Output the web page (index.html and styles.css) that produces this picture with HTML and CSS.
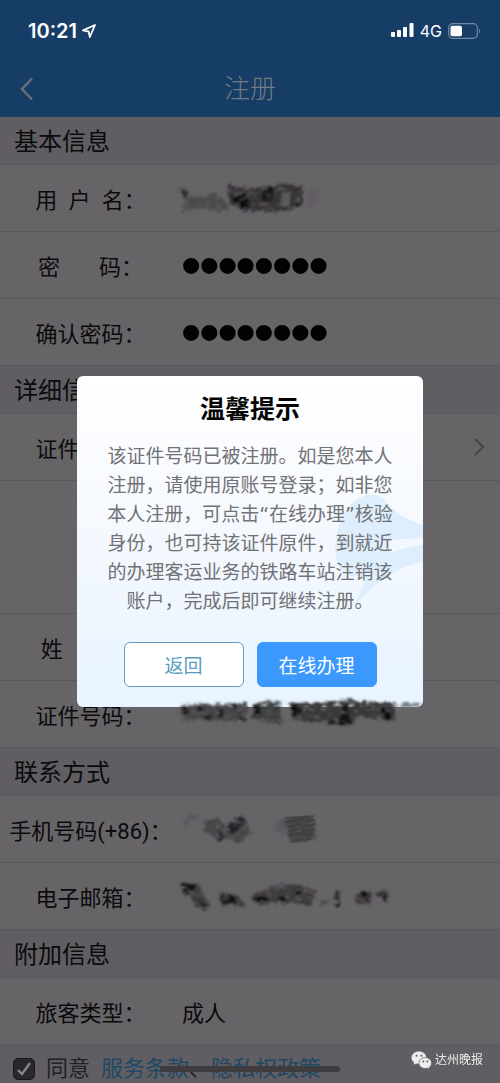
FILE: index.html
```html
<!DOCTYPE html>
<html lang="zh-CN">
<head>
  <meta charset="UTF-8" />
  <meta name="viewport" content="width=device-width, initial-scale=1.0"/>
  <title>注册</title>
  <link rel="stylesheet" href="styles.css">
</head>
<body>
  <header class="header">
    <div class="status-bar">
      <div class="status-left">
        <span>10:21</span>
        <svg width="14" height="14" viewBox="0 0 14 14"><path d="M1 6.4L13 1L7.8 13L6.7 7.5Z" fill="none" stroke="#fff" stroke-width="1.8" stroke-linejoin="round"/></svg>
      </div>
      <div class="status-right">
        <svg width="23" height="15" viewBox="0 0 23 15" fill="#fff">
          <rect x="0" y="9" width="4" height="5" rx="1"/>
          <rect x="6" y="7" width="4" height="7" rx="1"/>
          <rect x="12" y="4" width="4" height="10" rx="1"/>
          <rect x="18.500" y="0" width="4" height="14" rx="1"/>
        </svg>
        <span>4G</span>
        <svg width="33" height="16" viewBox="0 0 33 16">
          <rect x=".7" y=".7" width="28.600" height="14.600" rx="4" fill="none" stroke="#7189a5" stroke-width="1.2"/>
          <rect x="2.500" y="2.700" width="11.500" height="10.600" rx="2" fill="#fff"/>
          <path d="M31 5.500Q33 8 31 10.500Z" fill="#7189a5"/>
        </svg>
      </div>
    </div>
    <div class="nav">
      <button class="back" aria-label="返回上一页">
        <svg width="14" height="24" viewBox="0 0 14 24"><path d="M12 1.500L2 12L12 22.500" fill="none" stroke="#6b7178" stroke-width="2.4"/></svg>
      </button>
      <h1>注册</h1>
    </div>
  </header>

  <svg class="defs" width="0" height="0" aria-hidden="true">
    <filter id="smudge" x="-5%" y="-30%" width="110%" height="160%">
      <feTurbulence type="fractalNoise" baseFrequency=".16 .26" numOctaves="3" seed="7" result="n"/>
      <feDisplacementMap in="SourceGraphic" in2="n" scale="8" xChannelSelector="R" yChannelSelector="G" result="d"/>
      <feColorMatrix in="n" type="matrix" values="0 0 0 0 0  0 0 0 0 0  0 0 0 0 0  3 0 0 0 -.5" result="mask"/>
      <feComposite in="d" in2="mask" operator="in"/>
      <feGaussianBlur stdDeviation=".8"/>
    </filter>
  </svg>

  <form>
    <h2>基本信息</h2>
    <div class="row">
      <label for="user">用&ensp;户&ensp;名：</label>
      <div class="value" id="user">
        <svg class="scribble" width="150" height="36" viewBox="0 0 150 36">
          <g filter="url(#smudge)">
            <path d="M2 6L10 10L9 15L20 17L38 13L50 24L50 31L20 29L5 31L7 18Z" fill="#4b494c"/>
            <path d="M2 6L10 12L7 17L4 12Z" fill="#29282a"/>
            <path d="M49 4L70 8L94 6L102 3L125 6L125 25L112 31L70 31L52 24Z" fill="#343235"/>
            <path d="M52 17L67 14L74 24L67 31Z" fill="#0b0a0c"/>
            <path d="M85 9L96 6L95 20L84 23Z" fill="#161517"/>
            <path d="M104 13L113 12L112 24L103 27Z" fill="#58565a"/>
            <path d="M119 20L126 20L120 26Z" fill="#0b0a0c"/>
            <path d="M129 12L140 10L139 25L130 28Z" fill="#5f5c60"/>
          </g>
        </svg>
      </div>
    </div>
    <div class="row">
      <label for="pwd">密&emsp;&ensp;&nbsp;码：</label>
      <input class="value" type="password" id="pwd" value="12345678" />
    </div>
    <div class="row">
      <label for="pwd2">确认密码：</label>
      <input class="value" type="password" id="pwd2" value="12345678" />
    </div>

    <h2>详细信息</h2>
    <div class="row">
      <span class="label">证件类型：</span>
      <svg class="arrow" width="12" height="18" viewBox="0 0 12 18"><path d="M2 1L10 9L2 17" fill="none" stroke="#454347" stroke-width="2"/></svg>
    </div>
    <div class="row blank"></div>
    <div class="row">
      <span class="label">姓&emsp;&ensp;名：</span>
    </div>
    <div class="row">
      <span class="label">证件号码：</span>
      <div class="value over">
        <svg class="scribble" width="244" height="36" viewBox="0 0 244 36">
          <g filter="url(#smudge)">
            <path d="M3 8L70 7L68 25L5 24Z" fill="#464447"/>
            <path d="M5 8L12 15L7 20ZM20 9L27 12L20 18ZM27 18L36 21L29 26ZM38 14L46 13L45 22L39 21ZM54 8L60 11L56 16ZM62 18L69 23L58 25Z" fill="#141315"/>
            <path d="M75 7L102 4L104 28L74 24Z" fill="#3d4041"/>
            <path d="M76 9L82 9L83 18L76 18ZM95 10L102 10L97 15Z" fill="#0d0c0e"/>
            <path d="M111 7L145 6L173 3L181 6L218 6L216 25L180 20L174 29L145 27L116 23Z" fill="#373839"/>
            <path d="M112 8L123 10L124 20L116 22ZM164 14L170 8L174 28L150 26L163 21ZM201 12L208 11L217 24L209 23Z" fill="#0b0a0c"/>
            <path d="M215 8L243 6L239 10L219 13Z" fill="#777f82"/>
          </g>
        </svg>
      </div>
    </div>

    <h2>联系方式</h2>
    <div class="row">
      <span class="label">手机号码(+86)：</span>
      <div class="value">
        <svg class="scribble" width="150" height="40" viewBox="0 0 150 40">
          <g filter="url(#smudge)">
            <path d="M6 11L12 5L28 11L14 9L8 17ZM8 28L12 25L10 30Z" fill="#565458"/>
            <path d="M26 12L40 8L48 17L64 5L74 24L58 35L53 30L40 31L27 23Z" fill="#464447"/>
            <path d="M39 21L48 27L44 32L39 28ZM49 18L66 7L68 13L54 26Z" fill="#1f1d20"/>
            <path d="M97 12L110 10L108 28L99 24Z" fill="#5c595e"/>
            <path d="M106 9L136 7L138 31L111 33Z" fill="#444245"/>
          </g>
          <path d="M106 9L136 7L108 13L137 11L109 18L138 15L110 22L137 20L111 27L136 25L112 33L134 30" fill="none" stroke="#3f3d40" stroke-width="1.5" opacity=".7"/>
        </svg>
      </div>
    </div>
    <div class="row">
      <span class="label">电子邮箱：</span>
      <div class="value">
        <svg class="scribble" width="220" height="36" viewBox="0 0 220 36">
          <g filter="url(#smudge)">
            <path d="M4 5L20 6L34 29L19 30L12 18L5 15ZM40 14L60 17L70 28L43 27ZM74 17L96 8L120 6L139 14L132 28L109 23L99 26L76 26Z" fill="#3d3b3e"/>
            <path d="M4 5L18 7L16 14L6 13ZM18 25L33 27L26 31ZM43 19L58 18L60 25L44 25ZM77 18L92 19L87 26L78 24ZM101 18L112 21L106 27ZM117 12L125 13L120 22Z" fill="#0f0e10"/>
            <path d="M142 23L152 24L144 29ZM157 12L162 14L162 29L156 28ZM178 16L194 12L193 26L177 26ZM199 14L211 13L210 23L200 18Z" fill="#343235"/>
            <path d="M157 22L163 27L158 29ZM184 15L190 14L188 20ZM204 17L210 18L207 24Z" fill="#0f0e10"/>
          </g>
        </svg>
      </div>
    </div>

    <h2>附加信息</h2>
    <div class="row">
      <span class="label">旅客类型：</span>
      <span class="value">成人</span>
    </div>

    <div class="agree">
      <input type="checkbox" id="agree" checked />
      <label for="agree">同意</label>
      <div class="links"><a href="#">服务条款</a>、<a href="#">隐私权政策</a></div>
    </div>
  </form>

  <div class="home-indicator"></div>

  <div class="overlay">
    <div class="dialog" role="dialog" aria-labelledby="dialogTitle">
      <svg class="plane" width="90" height="116" viewBox="0 0 90 116">
        <path d="M15 15Q38 -7 53 10Q67 27 90 33V46L57 48L56 61Q75 55 90 52V70Q53 76 21 115L35 82Q14 88 7 77Q0 64 3 47Q6 26 15 15Z" fill="#deeefc"/>
      </svg>
      <h3 id="dialogTitle">温馨提示</h3>
      <p>该证件号码已被注册。如是您本人<br>注册，请使用原账号登录；如非您<br>本人注册，可点击“在线办理”核验<br>身份，也可持该证件原件，到就近<br>的办理客运业务的铁路车站注销该<br>账户，完成后即可继续注册。</p>
      <div class="buttons">
        <button class="btn">返回</button>
        <button class="btn primary">在线办理</button>
      </div>
    </div>
  </div>

  <div class="watermark">
    <svg width="21" height="19" viewBox="0 0 21 19">
      <path d="M8 0.500C3.800 .5 .5 3.200 .5 6.700C.5 8.700 1.500 10.300 3.200 11.500L2.500 13.800L5.200 12.500C6.100 12.800 7 12.900 8 12.900C12.100 12.900 15.300 10.100 15.300 6.700C15.300 3.200 12.100 .5 8 .5Z" fill="#ececec"/>
      <path d="M14.300 6.500C10.600 6.500 7.900 8.900 7.900 12C7.900 15.100 10.700 17.500 14.300 17.500C15.200 17.500 16 17.300 16.700 17.100L18.900 18.300L18.300 16.300C19.700 15.300 20.600 13.700 20.600 12C20.600 8.900 17.800 6.500 14.300 6.500Z" fill="#ececec" stroke="#605e62" stroke-width=".7"/>
      <g fill="#605e62"><circle cx="5.500" cy="4.800" r="1"/><circle cx="10.400" cy="4.800" r="1"/><circle cx="12.300" cy="10.500" r=".9"/><circle cx="16.400" cy="10.500" r=".9"/></g>
    </svg>
    <span>达州晚报</span>
  </div>
</body>
</html>
```
FILE: styles.css
```css
* {
  box-sizing: border-box;
}

body {
  margin: 0;
  min-height: 100vh;
  background-color: #605e62;
  font-family: Roboto, 'Noto Sans CJK SC', sans-serif;
  font-size: 22px;
  color: #0b0a0c;
}

h1, h2, h3, p {
  margin: 0;
  font-weight: 400;
}

button {
  font-family: inherit;
  cursor: pointer;
}

/* header */
.header {
  height: 117px;
  background-color: #163d66;
}

.status-bar {
  display: flex;
  justify-content: space-between;
  align-items: center;
  height: 61px;
  padding: 0 19px 0 28px;
  color: white;
  font-family: Inter, sans-serif;
}

.status-left, .status-right {
  display: flex;
  align-items: center;
}

.status-left {
  gap: 5px;
  font-size: 20px;
  font-weight: 600;
}

.status-right {
  gap: 6px;
  font-size: 16px;
  font-weight: 400;
}

.nav {
  display: grid;
  grid-template-columns: 60px 1fr 60px;
  align-items: center;
  height: 56px;
}

.nav h1 {
  text-align: center;
  font-size: 26px;
  font-weight: 300;
  line-height: 36px;
  color: #747a80;
}

.back {
  display: flex;
  padding: 0 0 0 20px;
  border: none;
  background: none;
}

/* form */
h2 {
  height: 48px;
  padding-left: 14px;
  border-bottom: 1px solid #5a585c;
  font-size: 24px;
  line-height: 50px;
}

.defs {
  position: absolute;
}

.row {
  display: flex;
  align-items: center;
  height: 67px;
  border-bottom: 1px solid #5a585c;
  background-color: #676468;
}

.blank {
  height: 133px;
}

.row label, .label {
  flex: none;
  width: 170px;
  text-align: center;
  white-space: nowrap;
  font-feature-settings: "halt";
}

.value {
  flex: 1;
  min-width: 0;
  margin-left: 12px;
}

input.value {
  height: 60px;
  padding: 0;
  border: none;
  outline: none;
  background: none;
  font-family: 'Liberation Sans', sans-serif;
  font-size: 52px;
  color: #030204;
  -webkit-text-stroke: 2px #030204;
}

.scribble {
  display: block;
  margin-left: -4px;
}

.over {
  position: relative;
  z-index: 3;
}

.arrow {
  margin: 0 15px 0 auto;
}

.agree {
  display: flex;
  align-items: center;
  padding: 10px 13px 0;
  line-height: 28px;
  color: #222124;
}

.agree input {
  appearance: none;
  width: 22px;
  height: 22px;
  margin: 0 11px 0 0;
  border: 1px solid #19181b;
  border-radius: 5px;
  background-color: #29282c;
}

.agree input:checked {
  background-image: url("data:image/svg+xml,%3Csvg xmlns='http://www.w3.org/2000/svg' viewBox='0 0 20 20'%3E%3Cpath d='M4 11L8 15L16 4' fill='none' stroke='%23898689' stroke-width='2.4'/%3E%3C/svg%3E");
}

.links {
  margin-left: 11px;
}

.links a {
  color: #1d4866;
  text-decoration: none;
}

.home-indicator {
  position: fixed;
  bottom: 11px;
  left: 50%;
  width: 36%;
  height: 6px;
  border-radius: 3px;
  background-color: #3e3c3f;
  transform: translateX(-50%);
}

/* dialog */
.overlay {
  position: fixed;
  inset: 0;
  z-index: 2;
  display: flex;
  justify-content: center;
  align-items: center;
}

.dialog {
  position: relative;
  width: 346px;
  padding: 16px 20px 20px;
  border-radius: 6px;
  background: linear-gradient(#ffffff, #f4f8fe 50%, #e8f4ff);
  text-align: center;
}

.plane {
  position: absolute;
  top: 116px;
  right: 0;
}

.dialog h3, .dialog p, .buttons {
  position: relative;
}

.dialog h3 {
  font-size: 25px;
  font-weight: 700;
  line-height: 36px;
  color: #050505;
}

.dialog p {
  margin: 14px 0 26px;
  font-family: 'DejaVu Sans', 'Noto Sans CJK SC', sans-serif;
  font-size: 19px;
  line-height: 29px;
  white-space: nowrap;
  color: #717275;
}

.buttons {
  display: flex;
  justify-content: center;
  gap: 13px;
}

.btn {
  width: 120px;
  height: 45px;
  padding: 0;
  border: 1px solid #5f9dbc;
  border-radius: 6px;
  background-color: white;
  font-size: 19px;
  color: #5b9cbe;
}

.primary {
  border-color: #3b98fd;
  background-color: #3b98fd;
  color: white;
}

.watermark {
  position: fixed;
  right: 17px;
  bottom: 13px;
  display: flex;
  align-items: center;
  gap: 3px;
  font-size: 12px;
  font-weight: 400;
  line-height: 20px;
  color: #ececec;
}
```
